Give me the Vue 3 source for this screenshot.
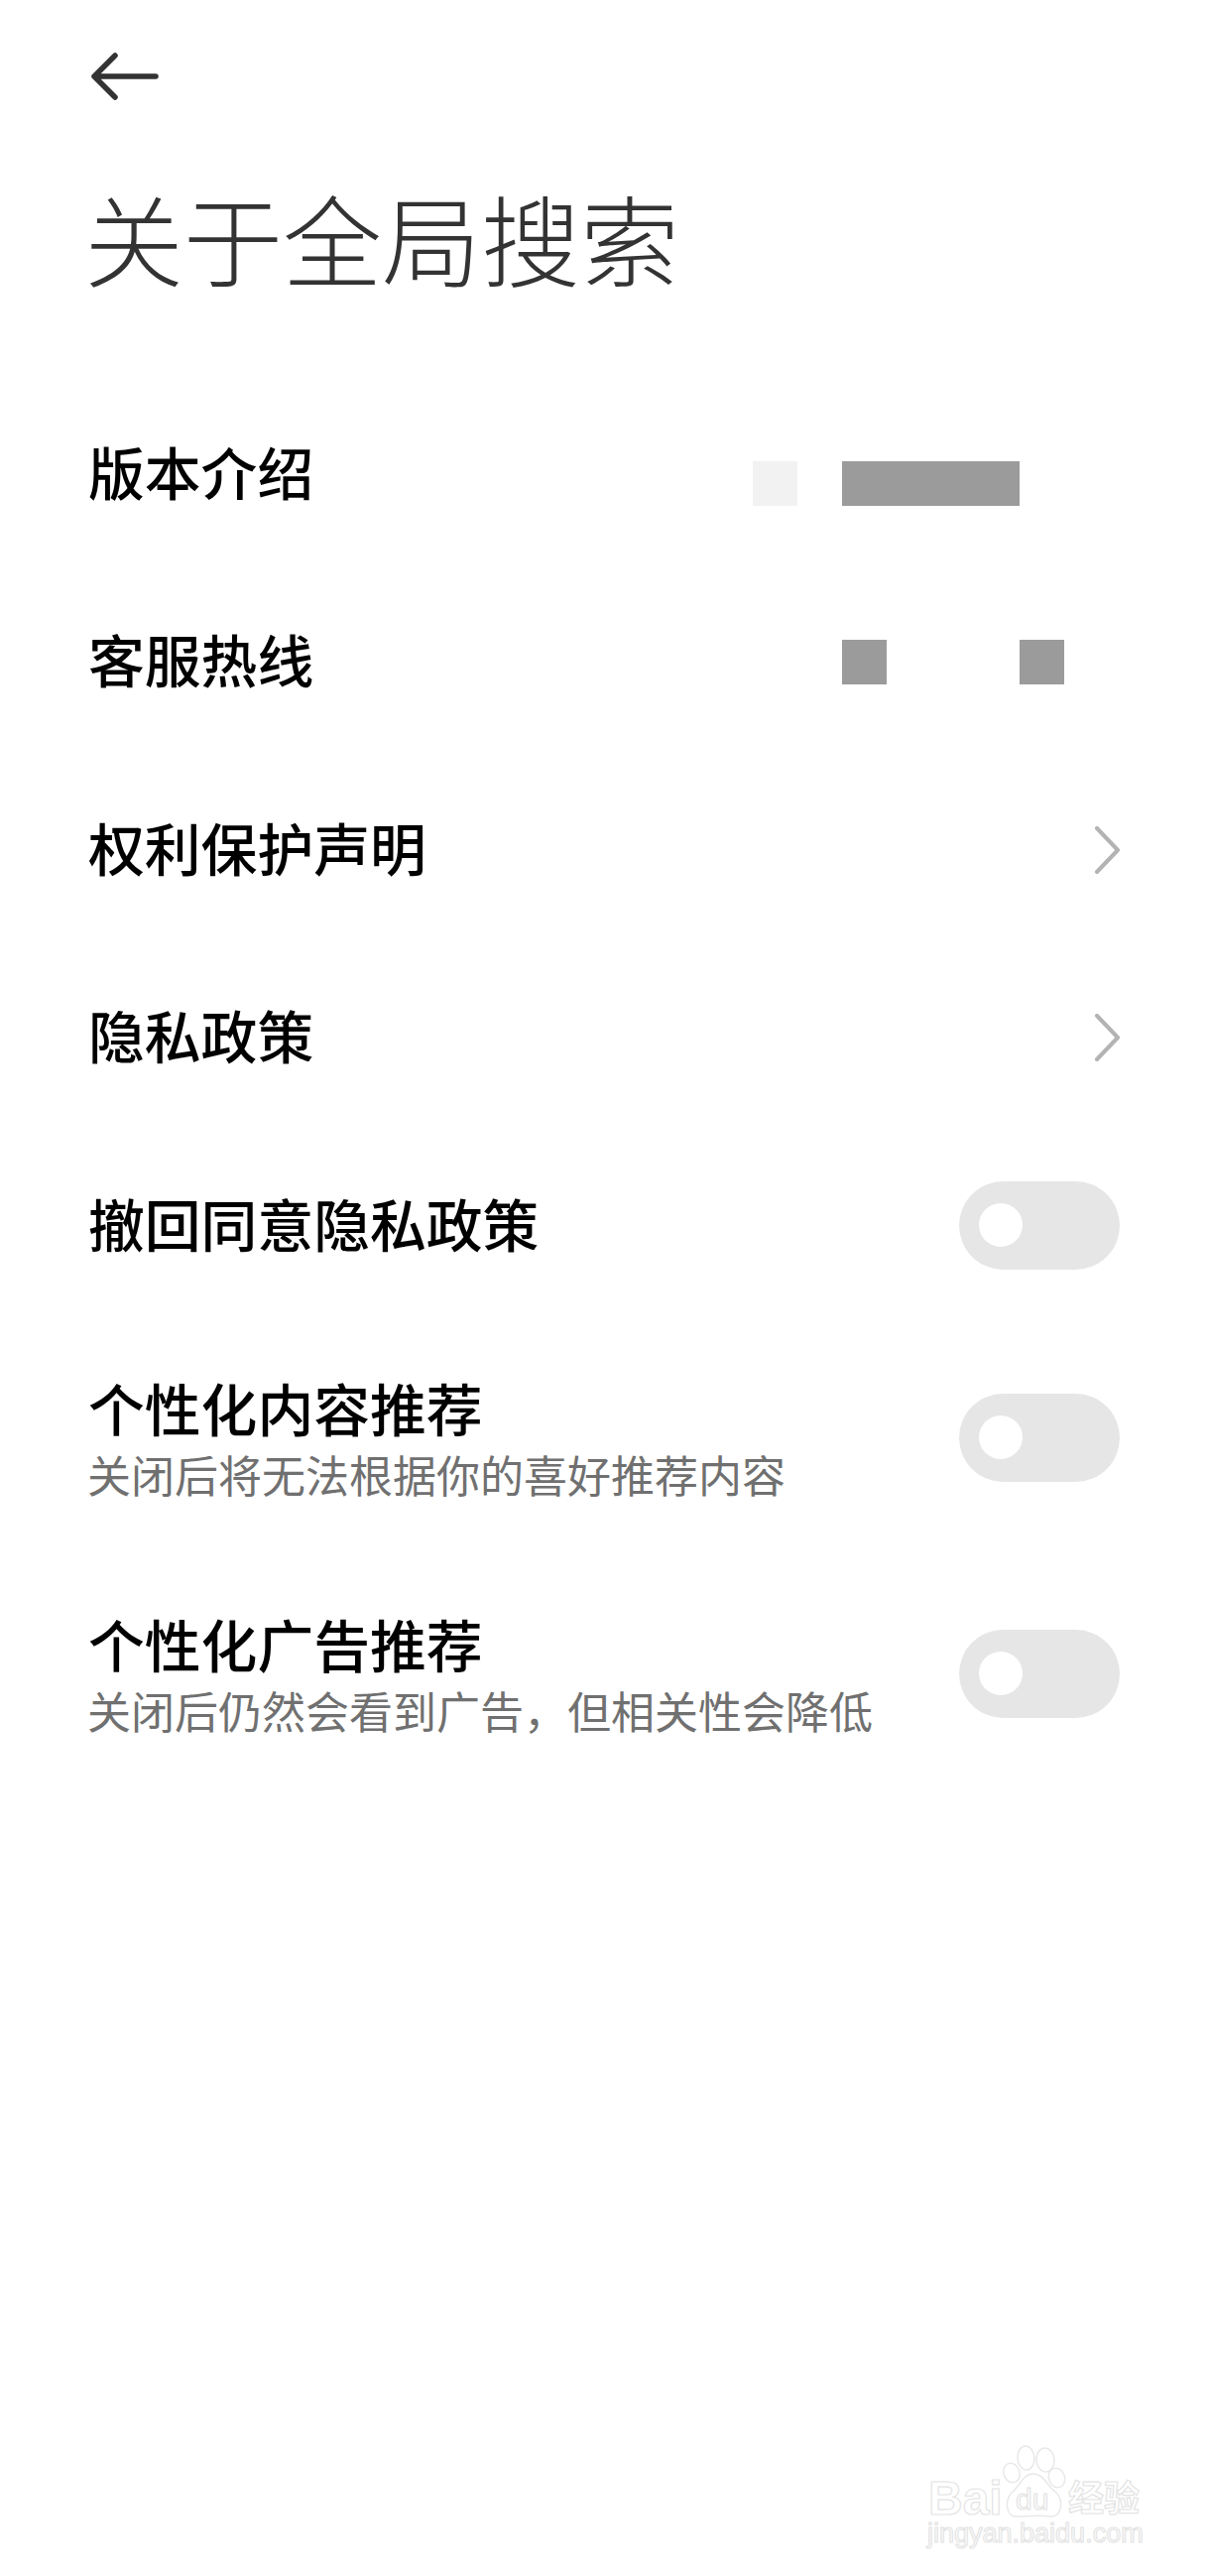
<script setup>
const rows = [
  { title: '版本介绍', kind: 'version' },
  { title: '客服热线', kind: 'phone' },
  { title: '权利保护声明', kind: 'link' },
  { title: '隐私政策', kind: 'link' },
  { title: '撤回同意隐私政策', kind: 'toggle' },
  { title: '个性化内容推荐', sub: '关闭后将无法根据你的喜好推荐内容', kind: 'toggle' },
  { title: '个性化广告推荐', sub: '关闭后仍然会看到广告，但相关性会降低', kind: 'toggle' },
]
</script>

<template>
  <div class="page">
    <div class="topbar">
      <svg class="back" width="70" height="48" viewBox="0 0 70 48">
        <path d="M25 3 L4 24 L25 45 M4 24 H66" />
      </svg>
    </div>

    <h1 class="heading">关于全局搜索</h1>

    <div class="list">
      <div v-for="row in rows" :key="row.title" class="row" :class="{ tall: row.sub }">
        <div class="text">
          <div class="title">{{ row.title }}</div>
          <div v-if="row.sub" class="sub">{{ row.sub }}</div>
        </div>

        <div v-if="row.kind === 'version'" class="blocks version">
          <span class="block light"></span>
          <span class="block wide"></span>
        </div>

        <div v-if="row.kind === 'phone'" class="blocks phone">
          <span class="block"></span>
          <span class="block"></span>
        </div>

        <svg v-if="row.kind === 'link'" class="chevron" width="26" height="48" viewBox="0 0 26 48">
          <path d="M3 2 L24 24 L3 46" />
        </svg>

        <div v-if="row.kind === 'toggle'" class="toggle">
          <span class="knob"></span>
        </div>
      </div>
    </div>

    <div class="watermark">
      <svg width="230" height="120" viewBox="0 0 230 120">
        <g class="paw">
          <ellipse cx="87" cy="31" rx="8" ry="10" transform="rotate(-20 87 31)" />
          <ellipse cx="101.5" cy="16" rx="8.5" ry="12" transform="rotate(-5 101.5 16)" />
          <ellipse cx="121" cy="18" rx="9" ry="12" transform="rotate(-5 121 18)" />
          <ellipse cx="132.5" cy="36" rx="8" ry="10" transform="rotate(-20 132.5 36)" />
          <path d="M109 32 C98 32 96 44 88 50 C80 56 80 75 92 75 C100 75 118 73 126 75 C138 76 140 58 131 50 C122 44 120 32 109 32 Z" />
        </g>
        <text class="mark big" x="3" y="73">Bai</text>
        <text class="mark mid" x="91" y="68">du</text>
        <text class="mark cjk" x="144" y="70">经验</text>
        <text class="mark small" x="2" y="101">jingyan.baidu.com</text>
      </svg>
    </div>
  </div>
</template>

<style>
html, body {
  margin: 0;
  background: #fff;
}
</style>

<style scoped>
.page {
  position: relative;
  width: 1220px;
  height: 2597px;
  background: #fff;
  font-family: "Noto Sans CJK SC", "Noto Sans", sans-serif;
  overflow: hidden;
}

.topbar {
  height: 53px;
  padding: 53px 0 0 91px;
}

.back {
  display: block;
  fill: none;
  stroke: #333;
  stroke-width: 5.5;
  stroke-linecap: round;
  stroke-linejoin: round;
}

.heading {
  margin: 68px 0 0 85px;
  font-size: 100px;
  line-height: 130px;
  font-weight: 300;
  color: #333;
}

.list {
  margin-top: 79px;
}

.row {
  display: flex;
  align-items: center;
  justify-content: space-between;
  height: 189.5px;
  padding: 0 91px 0 89px;
  box-sizing: border-box;
}

.row.tall {
  height: 238px;
}

.text {
  padding-bottom: 8px;
}

.row.tall .text {
  padding-bottom: 0;
}

.title {
  font-size: 56.8px;
  line-height: 72px;
  font-weight: 500;
  color: #000;
}

.sub {
  margin-left: -1px;
  font-size: 44px;
  line-height: 64px;
  color: #707070;
}

.blocks {
  display: flex;
  height: 45px;
}

.version {
  gap: 45px;
  margin: 20px 101px 0 0;
}

.phone {
  gap: 134px;
  margin: 0 56px 0 0;
}

.block {
  display: block;
  width: 45px;
  height: 45px;
  background: #9b9b9b;
}

.block.light {
  background: #f2f2f2;
}

.block.wide {
  width: 179px;
}

.chevron {
  display: block;
  fill: none;
  stroke: #b3b3b3;
  stroke-width: 4;
  stroke-linecap: round;
  stroke-linejoin: round;
}

.toggle {
  position: relative;
  flex: none;
  width: 162px;
  height: 89px;
  border-radius: 45px;
  background: #e6e6e6;
}

.knob {
  position: absolute;
  left: 20px;
  top: 22px;
  width: 44px;
  height: 44px;
  border-radius: 50%;
  background: #fff;
}

.watermark {
  position: absolute;
  left: 933px;
  top: 2462px;
}

.watermark svg {
  display: block;
}

.paw ellipse,
.paw path {
  fill: #fff;
  stroke: #e8e8e8;
  stroke-width: 1.5;
}

.mark {
  fill: #fff;
  stroke: #e4e4e4;
  stroke-width: 1.2;
}

.big {
  font-family: "Liberation Sans", sans-serif;
  font-size: 48px;
  font-weight: 700;
}

.mid {
  font-family: "Liberation Sans", sans-serif;
  font-size: 30px;
}

.cjk {
  font-family: "Noto Sans CJK SC", sans-serif;
  font-size: 36px;
  font-weight: 700;
}

.small {
  font-family: "Liberation Sans", sans-serif;
  font-size: 27px;
}
</style>
